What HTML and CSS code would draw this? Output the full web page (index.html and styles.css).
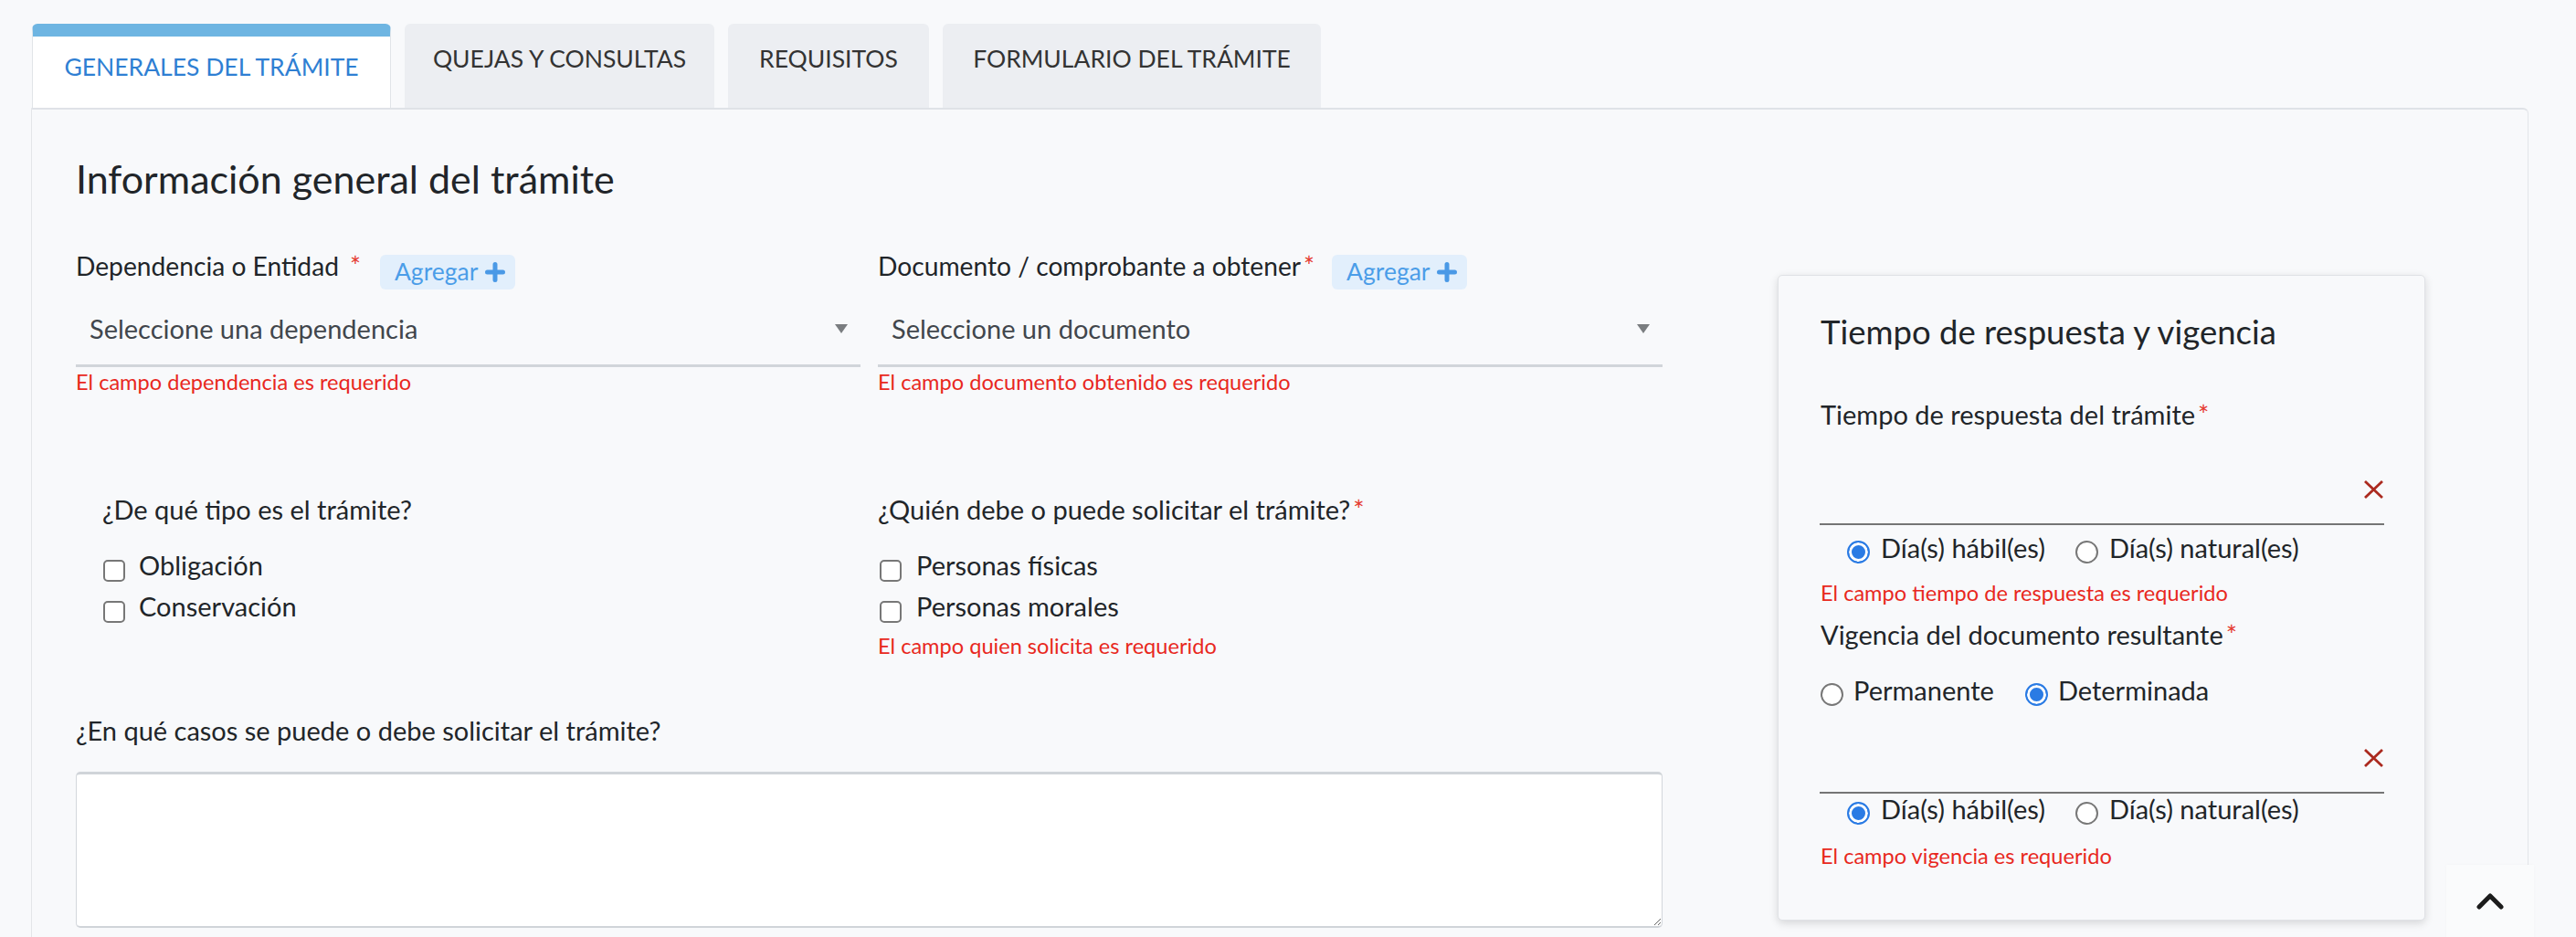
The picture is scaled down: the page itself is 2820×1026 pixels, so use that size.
FILE: index.html
```html
<!DOCTYPE html>
<html lang="es">
<head>
<meta charset="utf-8">
<title>Generales del trámite</title>
<link rel="stylesheet" href="styles.css">
</head>
<body>
<div class="page">
  <nav class="tabs">
    <div class="tab tab-active tab-w1">GENERALES DEL TRÁMITE</div>
    <div class="tab tab-w2">QUEJAS Y CONSULTAS</div>
    <div class="tab tab-w3">REQUISITOS</div>
    <div class="tab tab-w4">FORMULARIO DEL TRÁMITE</div>
  </nav>

  <section class="panel">
    <h1 class="panel-title">Información general del trámite</h1>

    <div class="main">
      <div class="form-left">
        <div class="grid-row">
          <div class="field">
            <div class="field-label">
              <span>Dependencia o Entidad</span><span class="req req-spaced">*</span>
              <span class="btn-add">Agregar<svg class="plus" viewBox="0 0 22 22"><path d="M11 2.5v17M2.5 11h17"/></svg></span>
            </div>
            <div class="select">
              <span>Seleccione una dependencia</span>
              <svg class="caret" viewBox="0 0 14 10"><polygon points="0,0 14,0 7,10"/></svg>
            </div>
            <div class="error">El campo dependencia es requerido</div>
          </div>
          <div class="field">
            <div class="field-label">
              <span>Documento / comprobante a obtener</span><span class="req">*</span>
              <span class="btn-add btn-add-tight">Agregar<svg class="plus" viewBox="0 0 22 22"><path d="M11 2.5v17M2.5 11h17"/></svg></span>
            </div>
            <div class="select">
              <span>Seleccione un documento</span>
              <svg class="caret" viewBox="0 0 14 10"><polygon points="0,0 14,0 7,10"/></svg>
            </div>
            <div class="error">El campo documento obtenido es requerido</div>
          </div>
        </div>

        <div class="grid-row grid-row-checks">
          <div class="field field-indent">
            <div class="q-label">¿De qué tipo es el trámite?</div>
            <div class="checks">
              <label class="check"><input type="checkbox" class="cb"><span>Obligación</span></label>
              <label class="check"><input type="checkbox" class="cb"><span>Conservación</span></label>
            </div>
          </div>
          <div class="field">
            <div class="q-label">¿Quién debe o puede solicitar el trámite?<span class="req">*</span></div>
            <div class="checks">
              <label class="check check-b"><input type="checkbox" class="cb"><span>Personas físicas</span></label>
              <label class="check check-b"><input type="checkbox" class="cb"><span>Personas morales</span></label>
            </div>
            <div class="error error-checks">El campo quien solicita es requerido</div>
          </div>
        </div>

        <div class="q-label q-label-cases">¿En qué casos se puede o debe solicitar el trámite?</div>
        <textarea class="textarea"></textarea>
      </div>

      <aside class="card">
        <h2 class="card-title">Tiempo de respuesta y vigencia</h2>

        <div class="card-label card-label-first">Tiempo de respuesta del trámite<span class="req">*</span></div>
        <div class="line-input line-input-first">
          <svg class="xmark" viewBox="0 0 23 22"><path d="M2 2l19 18M21 2L2 20"/></svg>
        </div>
        <div class="radios radios-indent radios-first">
          <label class="radio-item"><input type="radio" name="t1" class="rd" checked><span>Día(s) hábil(es)</span></label>
          <label class="radio-item"><input type="radio" name="t1" class="rd"><span>Día(s) natural(es)</span></label>
        </div>
        <div class="error error-card1">El campo tiempo de respuesta es requerido</div>

        <div class="card-label card-label-second">Vigencia del documento resultante<span class="req">*</span></div>
        <div class="radios radios-vig">
          <label class="radio-item radio-item-tight"><input type="radio" name="v1" class="rd"><span>Permanente</span></label>
          <label class="radio-item radio-item-tight"><input type="radio" name="v1" class="rd" checked><span>Determinada</span></label>
        </div>
        <div class="line-input line-input-second">
          <svg class="xmark" viewBox="0 0 23 22"><path d="M2 2l19 18M21 2L2 20"/></svg>
        </div>
        <div class="radios radios-indent radios-last">
          <label class="radio-item"><input type="radio" name="t2" class="rd" checked><span>Día(s) hábil(es)</span></label>
          <label class="radio-item"><input type="radio" name="t2" class="rd"><span>Día(s) natural(es)</span></label>
        </div>
        <div class="error error-card2">El campo vigencia es requerido</div>
      </aside>
    </div>
  </section>
</div>

<div class="to-top">
  <svg class="chevron" viewBox="0 0 30 18"><polyline points="3,15 15,3 27,15"/></svg>
</div>
</body>
</html>
```

FILE: styles.css
```css
* { box-sizing: border-box; }

html, body {
  margin: 0;
  padding: 0;
  background: #f8f9fb;
  font-family: Lato, "Liberation Sans", sans-serif;
  color: #212529;
  overflow: hidden;
}

.page {
  padding: 26px 0 0 34px;
  width: 2768px;
}

/* Tabs */
.tabs {
  display: flex;
  gap: 15px;
  padding-left: 1px;
}

.tab {
  display: flex;
  justify-content: center;
  height: 92px;
  padding: 21px 0 0;
  border-radius: 6px 6px 0 0;
  background: #eceef2;
  color: #333;
  font-size: 26.5px;
  line-height: 1.3;
  white-space: nowrap;
}

.tab-w1 { width: 393px; }
.tab-w2 { width: 339px; }
.tab-w3 { width: 220px; }
.tab-w4 { width: 414px; }

.tab-active {
  background: #fff;
  color: #2f7fd3;
  border-top: 14px solid #6eb5e2;
  border-left: 1px solid #e1e4e8;
  border-right: 1px solid #e1e4e8;
  padding-top: 16px;
}

/* Panel */
.panel {
  border: 1px solid #e3e5e9;
  border-top: 2px solid #dfe2e7;
  border-radius: 0 6px 0 0;
  padding: 50px 0 0 48px;
  min-height: 1000px;
}

.panel-title {
  margin: 0;
  font-size: 43px;
  line-height: 1.2;
  font-weight: 400;
  color: #212529;
}

.main {
  display: flex;
  align-items: flex-start;
  margin-top: 53px;
}

.form-left {
  width: 1737px;
  flex: none;
}

.grid-row {
  display: grid;
  grid-template-columns: 859px 859px;
  column-gap: 19px;
}

.grid-row-checks {
  margin-top: 108px;
}

.field-indent {
  padding-left: 29px;
}

.field-label {
  display: flex;
  align-items: flex-start;
  font-size: 28.2px;
  line-height: 1.2;
  white-space: nowrap;
}

.req {
  color: #e53a2f;
  margin-left: 3px;
}

.req-spaced {
  margin-left: 12px;
}

.btn-add {
  display: flex;
  align-items: center;
  gap: 8px;
  height: 38px;
  margin-top: 4px;
  margin-left: 21px;
  padding: 0 11px 0 16px;
  border-radius: 6px;
  background: #e2effc;
  color: #4b9de8;
  font-size: 26.5px;
  line-height: 1;
}

.btn-add-tight {
  margin-left: 19px;
}

.plus {
  width: 22px;
  height: 22px;
  fill: none;
  stroke: #4a99e6;
  stroke-width: 5;
  stroke-linecap: round;
}

.select {
  display: flex;
  align-items: center;
  justify-content: space-between;
  margin-top: 9px;
  padding: 17px 14px 22px 15px;
  border-bottom: 3px solid #d1d5da;
  font-size: 29px;
  line-height: 1.2;
  color: #41464c;
}

.caret {
  width: 14px;
  height: 10px;
  fill: #7a7d80;
}

.error {
  margin-top: 2px;
  font-size: 23.6px;
  line-height: 1.2;
  color: #e8281e;
}

.q-label {
  font-size: 29px;
  line-height: 1.2;
}

.checks {
  display: flex;
  flex-direction: column;
  gap: 10px;
  margin-top: 26px;
}

.check {
  display: flex;
  align-items: flex-start;
  gap: 15px;
  height: 35px;
  font-size: 29px;
  line-height: 1.2;
  padding-left: 1px;
}

.check-b {
  padding-left: 2px;
  gap: 16px;
}

.cb {
  appearance: none;
  -webkit-appearance: none;
  flex: none;
  width: 24px;
  height: 24px;
  margin: 11px 0 0;
  border: 2px solid #777;
  border-radius: 5px;
  background: #fff;
}

.error-checks {
  margin-top: 11px;
}

.q-label-cases {
  margin-top: 62px;
}

.textarea {
  display: block;
  width: 1737px;
  height: 171px;
  margin-top: 27px;
  border: 1px solid #d3d7dc;
  border-top: 3px solid #d0d4d9;
  border-bottom: 2px solid #d0d4d9;
  border-radius: 5px;
  background: #fff;
  font-family: inherit;
  font-size: 24px;
  resize: vertical;
}

/* Card */
.card {
  flex: none;
  width: 709px;
  margin-left: 126px;
  margin-top: 26px;
  padding: 39px 45px 56px 46px;
  border: 1px solid #e0e2e6;
  border-radius: 5px;
  background: #f8f9fb;
  box-shadow: 0 3px 10px rgba(0, 0, 0, 0.14);
}

.card-title {
  margin: 0;
  font-size: 36.5px;
  line-height: 1.25;
  font-weight: 400;
  color: #212529;
}

.card-label {
  font-size: 29px;
  line-height: 1.2;
}

.card-label-first { margin-top: 51px; }
.card-label-second { margin-top: 15px; }

.line-input {
  display: flex;
  justify-content: flex-end;
  align-items: flex-end;
  height: 93px;
  padding-bottom: 26px;
  border-bottom: 2px solid #757575;
  margin-left: -1px;
  margin-right: -1px;
}

.line-input-first { margin-top: 10px; }
.line-input-second { margin-top: 2px; }

.xmark {
  width: 23px;
  height: 22px;
  fill: none;
  stroke: #ab2a1f;
  stroke-width: 2.8;
}

.radios {
  display: flex;
  gap: 33px;
  font-size: 29px;
  line-height: 1.2;
}

.radios-indent { padding-left: 29px; }
.radios-first { margin-top: 8px; }
.radios-vig { margin-top: 26px; gap: 34px; }
.radios-last { margin-top: 0; }

.radio-item {
  display: flex;
  align-items: flex-start;
  gap: 12px;
  white-space: nowrap;
}

.radio-item-tight { gap: 11px; }

.rd {
  appearance: none;
  -webkit-appearance: none;
  flex: none;
  width: 25px;
  height: 25px;
  margin: 9px 0 0;
  border: 2px solid #777;
  border-radius: 50%;
  background: #fff;
}

.rd:checked {
  border-color: #2a7be4;
  background: #2a7be4;
  box-shadow: inset 0 0 0 3px #fff;
}

.error-card1 { margin-top: 17px; }
.error-card2 { margin-top: 19px; }

/* Back to top */
.to-top {
  position: fixed;
  right: 46px;
  bottom: -10px;
  width: 96px;
  height: 89px;
  display: flex;
  justify-content: center;
  padding-top: 31px;
  background: #fafbfc;
  box-shadow: 0 0 4px rgba(0, 0, 0, 0.025);
}

.chevron {
  width: 30px;
  height: 18px;
  fill: none;
  stroke: #1c1c1c;
  stroke-width: 5;
  stroke-linecap: round;
  stroke-linejoin: round;
}
```
